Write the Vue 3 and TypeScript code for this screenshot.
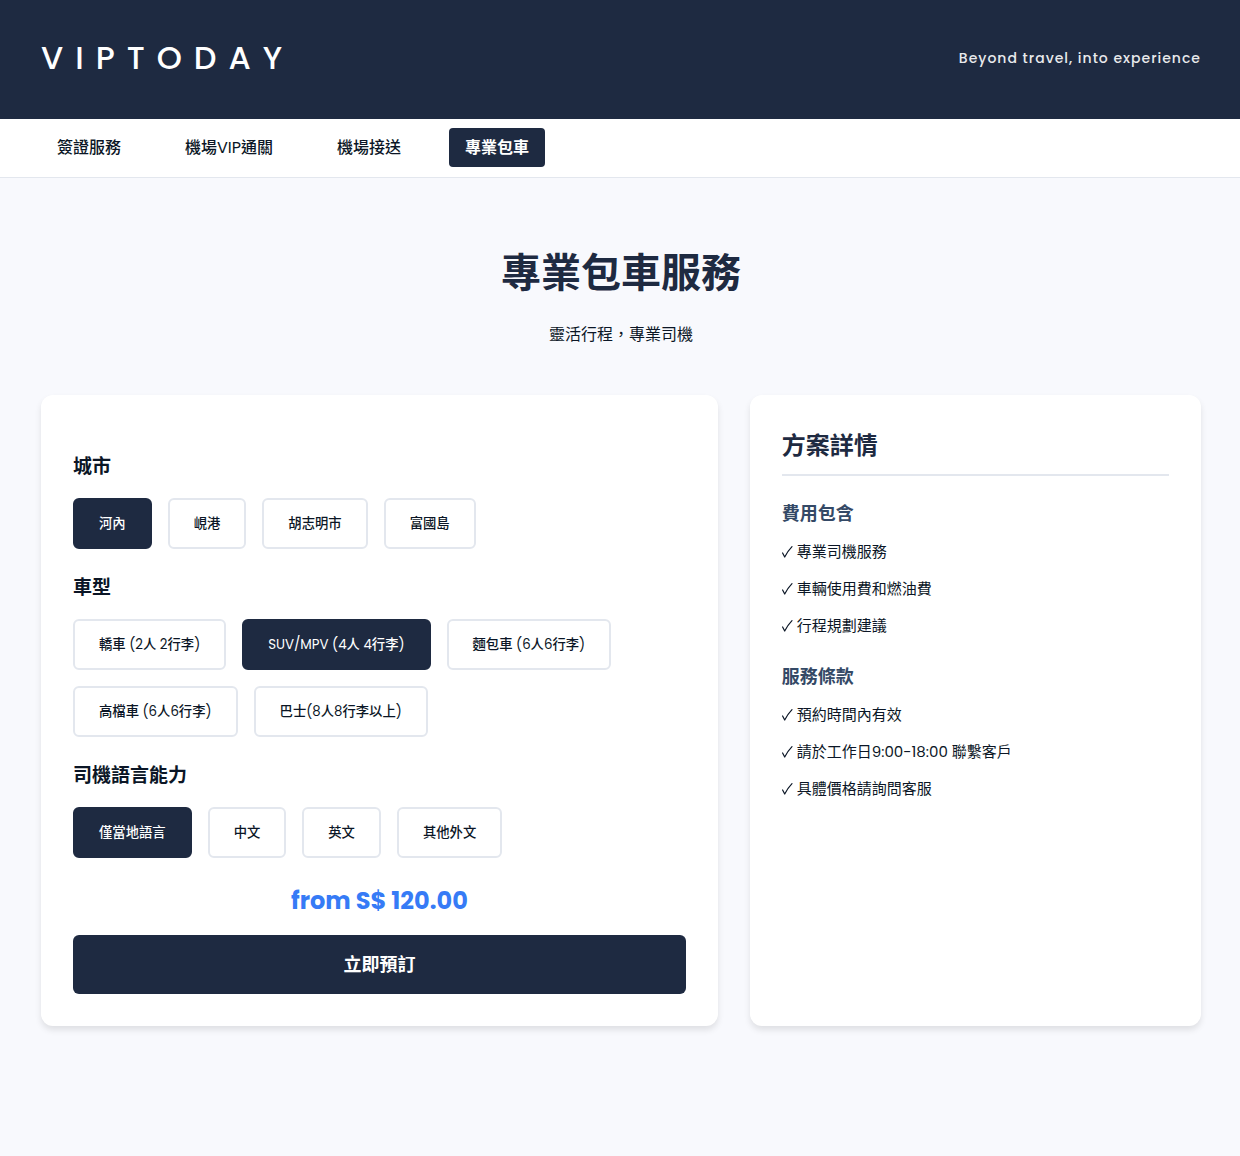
<script setup lang="ts">
import { computed, ref } from 'vue'

interface OptionGroup {
  key: string
  title: string
  options: string[]
}

interface DetailSection {
  title: string
  items: string[]
}

const navItems: string[] = ['簽證服務', '機場VIP通關', '機場接送', '專業包車']
const activeNav = ref<string>('專業包車')

const groups: OptionGroup[] = [
  { key: 'city', title: '城市', options: ['河內', '峴港', '胡志明市', '富國島'] },
  {
    key: 'car',
    title: '車型',
    options: ['轎車 (2人 2行李)', 'SUV/MPV (4人 4行李)', '麵包車 (6人6行李)', '高檔車 (6人6行李)', '巴士(8人8行李以上)'],
  },
  { key: 'language', title: '司機語言能力', options: ['僅當地語言', '中文', '英文', '其他外文'] },
]

const selected = ref<Record<string, string>>({
  city: '河內',
  car: 'SUV/MPV (4人 4行李)',
  language: '僅當地語言',
})

const details: DetailSection[] = [
  { title: '費用包含', items: ['專業司機服務', '車輛使用費和燃油費', '行程規劃建議'] },
  { title: '服務條款', items: ['預約時間內有效', '請於工作日9:00-18:00 聯繫客戶', '具體價格請詢問客服'] },
]

const price = ref<number>(120)
const priceLabel = computed<string>(() => `from S$ ${price.value.toFixed(2)}`)
</script>

<template>
  <div class="page">
    <header class="header">
      <div class="logo">VIPTODAY</div>
      <div class="tagline">Beyond travel, into experience</div>
    </header>

    <nav class="nav">
      <a
        v-for="item in navItems"
        :key="item"
        href="#"
        class="nav-link"
        :class="{ active: item === activeNav }"
        @click.prevent="activeNav = item"
      >{{ item }}</a>
    </nav>

    <main class="main">
      <h1 class="title">專業包車服務</h1>
      <p class="subtitle">靈活行程，專業司機</p>

      <div class="columns">
        <section class="card booking">
          <div v-for="group in groups" :key="group.key" class="group">
            <h3 class="group-title">{{ group.title }}</h3>
            <div class="options">
              <button
                v-for="option in group.options"
                :key="option"
                type="button"
                class="option"
                :class="{ selected: selected[group.key] === option }"
                @click="selected[group.key] = option"
              >{{ option }}</button>
            </div>
          </div>
          <div class="price">{{ priceLabel }}</div>
          <button type="button" class="book">立即預訂</button>
        </section>

        <aside class="card">
          <h2 class="details-title">方案詳情</h2>
          <section v-for="section in details" :key="section.title" class="details">
            <h3 class="details-heading">{{ section.title }}</h3>
            <ul class="details-list">
              <li v-for="item in section.items" :key="item">
                <svg class="check" width="12" height="14" viewBox="0 0 12 14" aria-hidden="true">
                  <path d="M0.6 8 L2.7 12 Q5.4 6.4 10 1.6" />
                </svg>
                <span>{{ item }}</span>
              </li>
            </ul>
          </section>
        </aside>
      </div>
    </main>
  </div>
</template>

<style>
body {
  margin: 0;
  background: #f8f9fd;
}
</style>

<style scoped>
.page {
  --navy: #1e2a41;
  --ink: #0b1626;
  --line: #e3e7ee;
  --font: Poppins, Inter, 'Noto Sans CJK TC', sans-serif;
  --font-medium: Poppins, Inter, 'Noto Sans CJK TC Medium', 'Noto Sans CJK TC', sans-serif;
  min-height: 100vh;
  color: var(--ink);
  font-family: var(--font);
  font-size: 16px;
}

.header {
  display: flex;
  align-items: center;
  justify-content: space-between;
  padding: 32px 39px 36px 41px;
  background: var(--navy);
  color: #fff;
}

.logo {
  font-size: 32px;
  line-height: 51px;
  font-weight: 500;
  letter-spacing: 12px;
}

.tagline {
  font-size: 14px;
  line-height: 24px;
  font-weight: 500;
  letter-spacing: 1px;
  opacity: 0.9;
}

.nav {
  display: flex;
  gap: 32px;
  padding: 9px 39px 10px 41px;
  background: #fff;
  border-bottom: 1px solid var(--line);
}

.nav-link {
  padding: 8px 16px;
  border-radius: 4px;
  color: var(--ink);
  font-family: var(--font-medium);
  line-height: 23px;
  text-decoration: none;
}

.nav-link.active {
  background: var(--navy);
  color: #fff;
  font-family: var(--font);
  font-weight: 700;
}

.main {
  padding: 64px 39px 64px 41px;
}

.title {
  margin: 0 0 17px;
  color: var(--navy);
  font-size: 40px;
  line-height: 62px;
  font-weight: 700;
  text-align: center;
}

.subtitle {
  margin: 0 0 46px;
  line-height: 28px;
  text-align: center;
}

.columns {
  display: grid;
  grid-template-columns: 3fr 2fr;
  gap: 32px;
}

.card {
  padding: 32px;
  border-radius: 12px;
  background: #fff;
  box-shadow: 0 4px 6px rgba(0, 0, 0, 0.1);
}

.booking {
  padding-top: 33px;
}

.group {
  margin-top: 24px;
}

.group-title {
  margin: 0 0 16px;
  font-size: 19px;
  line-height: 30px;
  font-weight: 700;
}

.options {
  display: flex;
  flex-wrap: wrap;
  gap: 16px;
}

.option {
  padding: 12px 24px;
  border: 2px solid var(--line);
  border-radius: 6px;
  background: #fff;
  color: var(--ink);
  font-family: var(--font-medium);
  font-weight: 400;
  line-height: 23px;
  cursor: pointer;
}

.option.selected {
  border-color: var(--navy);
  background: var(--navy);
  color: #fff;
}

.price {
  margin: 24px 0 16px;
  color: #367bf6;
  font-size: 24px;
  line-height: 37px;
  font-weight: 700;
  text-align: center;
}

.book {
  display: block;
  width: 100%;
  padding: 16px;
  border: 0;
  border-radius: 6px;
  background: var(--navy);
  color: #fff;
  font-family: var(--font);
  font-size: 18px;
  line-height: 27px;
  font-weight: 700;
  cursor: pointer;
}

.details-title {
  margin: 0 0 24px;
  padding-bottom: 10px;
  border-bottom: 2px solid var(--line);
  color: var(--navy);
  font-size: 24px;
  line-height: 37px;
  font-weight: 700;
}

.details + .details {
  margin-top: 26px;
}

.details-heading {
  margin: 0 0 13px;
  color: #344966;
  font-size: 18px;
  line-height: 27px;
  font-weight: 700;
}

.details-list {
  display: flex;
  flex-direction: column;
  gap: 14px;
  margin: 0;
  padding: 0;
  list-style: none;
}

.details-list li {
  display: flex;
  align-items: center;
  gap: 3px;
  font-size: 15px;
  line-height: 23px;
}

.check {
  flex: none;
  fill: none;
  stroke: currentColor;
  stroke-width: 1.2;
  stroke-linecap: round;
  stroke-linejoin: round;
}
</style>
